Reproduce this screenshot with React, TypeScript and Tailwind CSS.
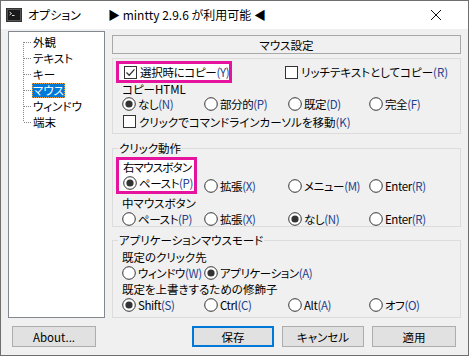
import React from 'react';

const font = "font-['Noto_Sans_CJK_JP','Noto_Sans',sans-serif] [font-feature-settings:'palt']";

// アクセラレータキー部分（少し青みがかって見える）
const Acc = ({ k }: { k: string }) => <span className="text-[#1e3f8f]">({k})</span>;

const Radio = ({ checked }: { checked?: boolean }) => (
  <svg width="14" height="14" viewBox="0 0 14 14" className="shrink-0">
    <circle cx="7" cy="7" r="6.3" fill="#fff" stroke="#333" strokeWidth="1" />
    {checked && <circle cx="7" cy="7" r="3.6" fill="#333" />}
  </svg>
);

const Check = ({ checked }: { checked?: boolean }) => (
  <svg width="13" height="13" viewBox="0 0 13 13" className="shrink-0">
    <rect x="0.5" y="0.5" width="12" height="12" fill="#fff" stroke="#333" />
    {checked && <path d="M2.5 6.5 L5.2 9.2 L10.5 3.4" fill="none" stroke="#333" strokeWidth="1.3" />}
  </svg>
);

const RadioItem = ({ label, k, checked }: { label: string; k: string; checked?: boolean }) => (
  <div className="flex items-center gap-[2px] whitespace-nowrap tracking-[-0.4px]">
    <Radio checked={checked} />
    <span>
      {label}
      <Acc k={k} />
    </span>
  </div>
);

const cols = 'grid grid-cols-[82px_84px_81px_1fr] h-[16px] items-center';

const TreeLine = ({ pos }: { pos: 'first' | 'mid' | 'last' }) => (
  <svg width="9" height="16" viewBox="0 0 9 16" className="shrink-0">
    <line
      x1="0.5"
      x2="0.5"
      y1={pos === 'first' ? 8 : 0}
      y2={pos === 'last' ? 8 : 16}
      stroke="#888"
      strokeDasharray="1 1"
    />
    <line x1="1" x2="9" y1="8.5" y2="8.5" stroke="#888" strokeDasharray="1 1" />
  </svg>
);

const treeItems = ['外観', 'テキスト', 'キー', 'マウス', 'ウィンドウ', '端末'];

function Group({ title, className, children }: { title?: string; className?: string; children: React.ReactNode }) {
  return (
    <fieldset className={`border border-[#dcdcdc] pl-[9px] pr-2 ${className ?? ''}`}>
      {title && <legend className="-ml-[4px] px-[1px] leading-[14px]">{title}</legend>}
      {children}
    </fieldset>
  );
}

export default function App() {
  return (
    <div className={`w-[469px] h-[356px] border border-[#6f6f6f] bg-[#f0f0f0] text-[11.5px] text-black leading-[16px] flex flex-col overflow-hidden ${font}`}>
      {/* タイトルバー */}
      <div className="h-[28px] shrink-0 bg-white flex items-center pl-[5px] text-[12px]">
        <svg width="16" height="14" viewBox="0 0 16 14" className="shrink-0">
          <rect x="0.5" y="0.5" width="15" height="13" fill="#555" stroke="#333" />
          <rect x="2" y="2" width="12" height="10" fill="#1a1a1a" />
          <path d="M3.5 4 L5.5 5.5 L3.5 7" stroke="#ddd" fill="none" strokeWidth="1" />
          <line x1="6" x2="8.5" y1="7.5" y2="7.5" stroke="#ddd" />
        </svg>
        <span className="ml-[6px] w-[80px]">オプション</span>
        <span className="whitespace-nowrap">▶ mintty 2.9.6 が利用可能 ◀</span>
        <svg width="12" height="12" viewBox="0 0 12 12" className="ml-auto mr-[26px]">
          <path d="M1 1 L11 11 M11 1 L1 11" stroke="#111" strokeWidth="1" />
        </svg>
      </div>

      <div className="flex gap-[7px] px-[7px] pt-[2px] h-[290px] shrink-0">
        {/* ツリー */}
        <div className="w-[97px] h-[287px] shrink-0 bg-white border border-[#828790] pt-[2px] pl-[14px]">
          {treeItems.map((t, i) => (
            <div key={t} className="flex items-center h-[16px]">
              <TreeLine pos={i === 0 ? 'first' : i === treeItems.length - 1 ? 'last' : 'mid'} />
              {t === 'マウス' ? (
                <span className="bg-[#0078d7] text-white px-[1px] h-[15px] leading-[14px] outline outline-1 outline-dotted outline-[#e8a040] -outline-offset-1">
                  {t}
                </span>
              ) : (
                <span className="px-[1px]">{t}</span>
              )}
            </div>
          ))}
        </div>

        {/* 右パネル */}
        <div className="w-[349px] pt-[4px] flex flex-col">
          <div className="h-[19px] shrink-0 border border-[#a8a8a8] flex items-center justify-center">マウス設定</div>

          <Group className="mt-[4px] h-[76px] shrink-0 pt-[2px]">
            <div className="flex items-center h-[22px]">
              <div className="w-[116px] -ml-[6px] h-[22px] border-[3px] border-[#e5139e] bg-white flex items-center gap-[3px] pl-[5px] whitespace-nowrap tracking-[-0.3px]">
                <Check checked />
                <span>
                  選択時にコピー<Acc k="Y" />
                </span>
              </div>
              <div className="ml-[53px] flex items-center gap-[3px] whitespace-nowrap">
                <Check />
                <span>
                  リッチテキストとしてコピー<Acc k="R" />
                </span>
              </div>
            </div>
            <div className="h-[13px] leading-[13px]">コピーHTML</div>
            <div className={cols}>
              <RadioItem label="なし" k="N" checked />
              <RadioItem label="部分的" k="P" />
              <RadioItem label="既定" k="D" />
              <RadioItem label="完全" k="F" />
            </div>
            <div className="flex items-center gap-[3px] h-[17px] mt-[1px] pl-[1px] whitespace-nowrap">
              <Check />
              <span>
                クリックでコマンドラインカーソルを移動<Acc k="K" />
              </span>
            </div>
          </Group>

          <Group title="クリック動作" className="mt-[7px] h-[86px] shrink-0">
            <div className="w-[81px] -ml-[6px] mt-[2px] h-[37px] border-[3px] border-[#e5139e] bg-white pl-[4px] whitespace-nowrap tracking-[-0.8px]">
              <div className="h-[15px] leading-[15px]">右マウスボタン</div>
              <div className="h-[16px] flex items-center">
                <RadioItem label="ペースト" k="P" checked />
              </div>
            </div>
            <div className={`${cols} -mt-[16px]`}>
              <div />
              <RadioItem label="拡張" k="X" />
              <RadioItem label="メニュー" k="M" />
              <RadioItem label="Enter" k="R" />
            </div>
            <div className="h-[15px] leading-[15px] mt-[2px]">中マウスボタン</div>
            <div className={cols}>
              <RadioItem label="ペースト" k="P" />
              <RadioItem label="拡張" k="X" />
              <RadioItem label="なし" k="N" checked />
              <RadioItem label="Enter" k="R" />
            </div>
          </Group>

          <Group title="アプリケーションマウスモード" className="mt-[6px] h-[85px] shrink-0">
            <div className="h-[15px] leading-[15px] mt-[3px]">既定のクリック先</div>
            <div className={cols}>
              <RadioItem label="ウィンドウ" k="W" />
              <div className="col-span-3">
                <RadioItem label="アプリケーション" k="A" checked />
              </div>
            </div>
            <div className="h-[15px] leading-[15px] mt-[1px]">既定を上書きするための修飾子</div>
            <div className={cols}>
              <RadioItem label="Shift" k="S" checked />
              <RadioItem label="Ctrl" k="C" />
              <RadioItem label="Alt" k="A" />
              <RadioItem label="オフ" k="O" />
            </div>
          </Group>
        </div>
      </div>

      {/* ボタン */}
      <div className="flex items-center px-[11px] mt-[7px]">
        <button className="w-[84px] h-[21px] bg-[#e1e1e1] border border-[#adadad]">About...</button>
        <div className="ml-auto flex gap-[8px] mr-[1px]">
          <button className="w-[82px] h-[21px] bg-[#e1e1e1] border-2 border-[#0078d7]">保存</button>
          <button className="w-[82px] h-[21px] bg-[#e1e1e1] border border-[#adadad]">キャンセル</button>
          <button className="w-[84px] h-[21px] bg-[#e1e1e1] border border-[#adadad]">適用</button>
        </div>
      </div>
    </div>
  );
}
